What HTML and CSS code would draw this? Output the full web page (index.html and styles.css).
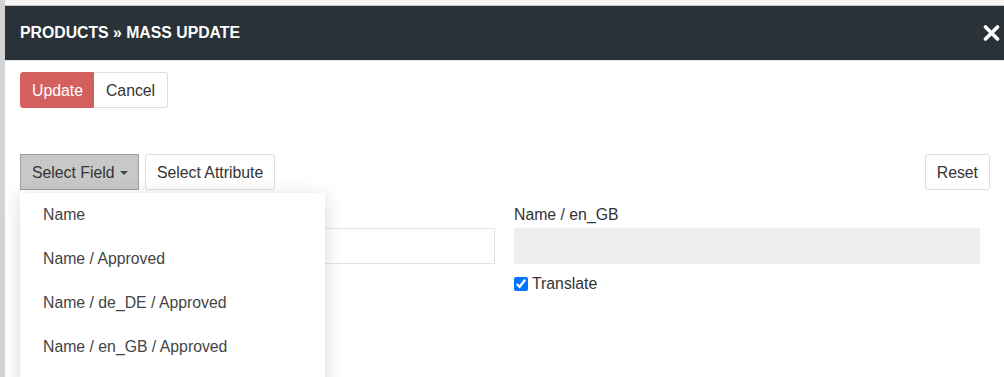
FILE: index.html
```html
<!DOCTYPE html>
<html lang="en">
<head>
    <meta charset="UTF-8">
    <meta name="viewport" content="width=device-width, initial-scale=1.0">
    <title>Products - Mass Update</title>
    <link rel="stylesheet" href="styles.css">
</head>
<body>
    <div class="backdrop-top"></div>
    <div class="modal">
        <div class="modal-header">
            <h1>PRODUCTS &raquo; MASS UPDATE</h1>
            <svg class="close" width="17" height="16" viewBox="0 0 17 16">
                <path d="M2.5 2 L14.5 14 M14.5 2 L2.5 14" stroke="#fff" stroke-width="3.6" stroke-linecap="round"/>
            </svg>
        </div>
        <div class="modal-body">
            <div class="btn-group">
                <button class="btn btn-danger">Update</button>
                <button class="btn">Cancel</button>
            </div>

            <div class="filter-row">
                <div class="dropdown">
                    <button class="btn btn-active">Select Field <span class="caret"></span></button>
                    <ul class="dropdown-menu">
                        <li>Name</li>
                        <li>Name / Approved</li>
                        <li>Name / de_DE / Approved</li>
                        <li>Name / en_GB / Approved</li>
                    </ul>
                </div>
                <button class="btn">Select Attribute</button>
                <button class="btn btn-reset">Reset</button>
            </div>

            <div class="fields">
                <div class="field">
                    <label>&nbsp;</label>
                    <input type="text" class="input">
                </div>
                <div class="field">
                    <label>Name / en_GB</label>
                    <input type="text" class="input" disabled>
                    <label class="check"><input type="checkbox" checked> Translate</label>
                </div>
            </div>
        </div>
    </div>
</body>
</html>
```

FILE: styles.css
```css
body {
    margin: 0;
    background-color: #d4d4d4;
    font-family: "Liberation Sans", Arial, sans-serif;
    font-size: 15.8px;
    color: #333;
    overflow: hidden;
}

.backdrop-top {
    height: 5px;
    margin-left: 5px;
    background-color: #f6f6f6;
    border-bottom: 1px solid #c8c8c8;
}

.modal {
    margin-left: 5px;
    background-color: #fff;
    height: 371px;
}

.modal-header {
    display: flex;
    align-items: center;
    justify-content: space-between;
    height: 54px;
    padding: 0 4px 0 15px;
    background-color: #283238;
    border-bottom: 1px solid #e4e4e4;
}

.modal-header h1 {
    margin: 0;
    color: #fff;
    font-size: 15.8px;
    font-weight: bold;
}

.close {
    display: block;
    cursor: pointer;
}

.modal-body {
    padding: 11px 14px 0 15px;
}

.btn {
    font-family: inherit;
    font-size: 15.8px;
    color: #333;
    background-color: #fff;
    border: 1px solid #ddd;
    border-radius: 3px;
    height: 36px;
    padding: 1px 11px 0;
    cursor: pointer;
}

.btn-group {
    display: flex;
}

.btn-group .btn:first-child {
    border-radius: 3px 0 0 3px;
}

.btn-group .btn:last-child {
    border-radius: 0 3px 3px 0;
    border-left: none;
    padding: 1px 12px 0;
}

.btn-danger {
    background-color: #d45f5f;
    border-color: #d45f5f;
    color: #fff;
    padding: 1px 10px 0 11px;
}

.filter-row {
    display: flex;
    gap: 6px;
    margin-top: 46px;
}

.btn-active {
    background-color: #c8c8c8;
    border-color: #9e9e9e;
    border-radius: 0;
    padding: 1px 10px 0 11px;
}

.caret {
    display: inline-block;
    width: 0;
    height: 0;
    margin-left: 1px;
    vertical-align: middle;
    border-top: 4px solid #444;
    border-left: 4px solid transparent;
    border-right: 4px solid transparent;
}

.btn-reset {
    margin-left: auto;
}

.dropdown {
    position: relative;
}

.dropdown-menu {
    position: absolute;
    top: 39px;
    left: 0;
    z-index: 10;
    width: 305px;
    margin: 0;
    padding: 0 0 24px;
    list-style: none;
    background-color: #fff;
    box-shadow: 0 4px 18px rgba(0, 0, 0, 0.16);
}

.dropdown-menu li {
    height: 44px;
    line-height: 44px;
    padding-left: 23px;
    color: #444;
}

.fields {
    display: grid;
    grid-template-columns: 475px 466px;
    gap: 19px;
    margin-top: 14px;
}

.field label {
    display: block;
    line-height: 22px;
    margin-bottom: 2px;
}

.input {
    display: block;
    width: 100%;
    height: 36px;
    box-sizing: border-box;
    border: 1px solid #e4e4e4;
    background-color: #fff;
    font-family: inherit;
    font-size: 15.8px;
}

.input:disabled {
    background-color: #eee;
    border-color: #eee;
}

.field .check {
    display: flex;
    align-items: center;
    gap: 4px;
    margin-top: 9px;
}

.check input {
    width: 14px;
    height: 14px;
    margin: 0;
}
```
